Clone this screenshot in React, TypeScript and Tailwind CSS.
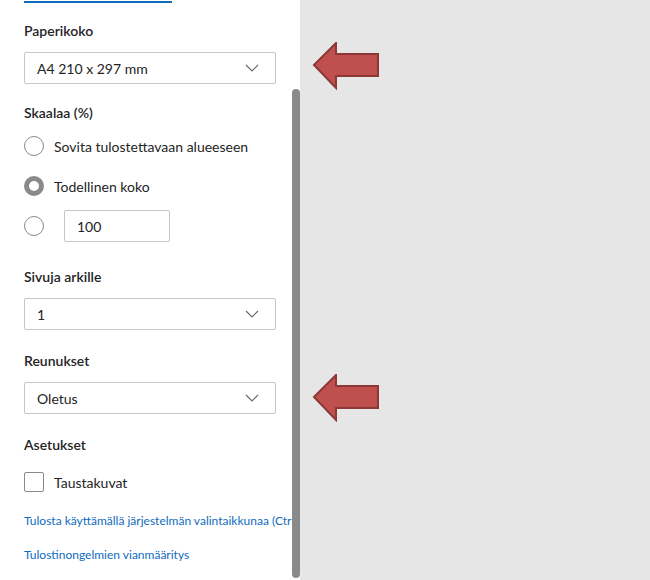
import React from "react";

const font = { fontFamily: 'Lato, "Noto Sans", sans-serif' };

const Chevron = () => (
  <svg width="14" height="8" viewBox="0 0 14 8" fill="none">
    <path d="M1 1l6 6 6-6" stroke="#6b6b6b" strokeWidth="1.2" />
  </svg>
);

const Select = ({ value }: { value: string }) => (
  <div className="flex items-center justify-between h-[32px] w-[252px] border border-[#c6c6c6] rounded-[2px] pl-[12px] pr-[16px] text-[14px] text-[#242424] bg-white">
    <span>{value}</span>
    <Chevron />
  </div>
);

const Label = ({ children, className }: { children: React.ReactNode; className?: string }) => (
  <div className={"text-[14px] leading-[20px] font-semibold text-[#242424] " + (className ?? "")}>{children}</div>
);

const Radio = ({ checked }: { checked?: boolean }) =>
  checked ? (
    <div className="w-[20px] h-[20px] rounded-full border-[5px] border-[#8a8a8a] bg-white shrink-0" />
  ) : (
    <div className="w-[20px] h-[20px] rounded-full border border-[#8a8a8a] bg-white shrink-0" />
  );

const Arrow = ({ className }: { className: string }) => (
  <svg className={"absolute " + className} width="68" height="48" viewBox="0 0 68 48">
    <path d="M2 23 L24 1 L24 12 L66 12 L66 34 L24 34 L24 46 Z" fill="#c0504d" stroke="#8c3836" strokeWidth="2" strokeLinejoin="miter" />
  </svg>
);

const App = () => {
  return (
    <div className="flex w-[650px] h-[580px] overflow-hidden bg-white relative" style={font}>
      <div className="w-[292px] shrink-0 overflow-hidden pl-[24px] whitespace-nowrap">
        <div className="h-[2px] w-[148px] bg-[#0f6cbd] mt-[1px]" />
        <Label className="mt-[18px]">Paperikoko</Label>
        <div className="mt-[11px]">
          <Select value="A4 210 x 297 mm" />
        </div>

        <Label className="mt-[19px]">Skaalaa (%)</Label>
        <div className="flex items-center gap-[10px] mt-[13px] h-[20px] text-[14px] text-[#242424]">
          <Radio />
          <span>Sovita tulostettavaan alueeseen</span>
        </div>
        <div className="flex items-center gap-[10px] mt-[20px] h-[20px] text-[14px] text-[#242424]">
          <Radio checked />
          <span>Todellinen koko</span>
        </div>
        <div className="flex items-center gap-[20px] mt-[14px] h-[32px] text-[14px] text-[#242424]">
          <Radio />
          <div className="h-[32px] w-[106px] border border-[#c6c6c6] rounded-[2px] flex items-center pl-[12px]">100</div>
        </div>

        <Label className="mt-[25px]">Sivuja arkille</Label>
        <div className="mt-[11px]">
          <Select value="1" />
        </div>

        <Label className="mt-[21px]">Reunukset</Label>
        <div className="mt-[11px]">
          <Select value="Oletus" />
        </div>

        <Label className="mt-[21px]">Asetukset</Label>
        <div className="flex items-center gap-[10px] mt-[17px] h-[20px] text-[14px] text-[#242424]">
          <div className="w-[20px] h-[20px] rounded-[2px] border border-[#8a8a8a] bg-white shrink-0" />
          <span>Taustakuvat</span>
        </div>

        <div className="mt-[21px] text-[12px] leading-[16px] text-[#0f6cbd]">
          Tulosta käyttämällä järjestelmän valintaikkunaa (Ctrl+Vaihto+P)
        </div>
        <div className="mt-[18px] text-[12px] leading-[16px] text-[#0f6cbd]">Tulostinongelmien vianmääritys</div>
      </div>

      <div className="w-[8px] shrink-0 pt-[89px] pb-[2px] flex flex-col bg-white">
        <div className="flex-1 rounded-full bg-[#8a8a8a]" />
      </div>

      <div className="flex-1 bg-[#e6e6e6]" />

      <Arrow className="left-[312px] top-[42px]" />
      <Arrow className="left-[312px] top-[374px]" />
    </div>
  );
};

export default App;
